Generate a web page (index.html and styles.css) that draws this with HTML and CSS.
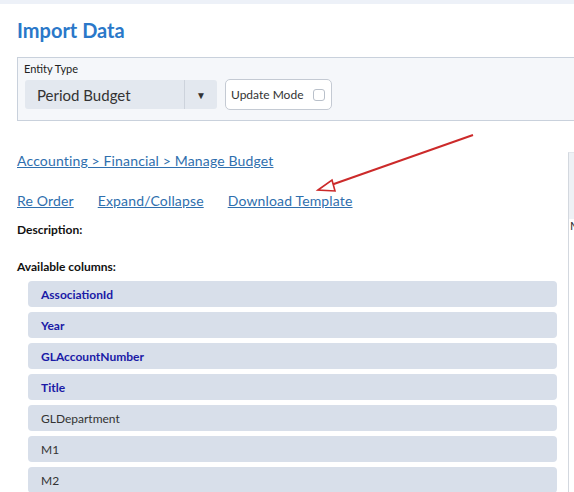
FILE: index.html
```html
<!DOCTYPE html>
<html>
<head>
<meta charset="utf-8">
<link rel="stylesheet" href="styles.css">
</head>
<body>
<div class="topbar"></div>
<div class="page">
  <h1 class="title">Import Data</h1>
  <div class="entity-panel">
    <div class="field-label">Entity Type</div>
    <div class="field-row">
      <div class="select">
        <span class="select-value">Period Budget</span>
        <span class="select-arrow">▼</span>
      </div>
      <label class="update-mode">Update Mode <span class="check"></span></label>
    </div>
  </div>
  <div class="content">
    <div class="main-col">
      <a class="link crumb" href="#">Accounting &gt; Financial &gt; Manage Budget</a>
      <div class="actions">
        <a class="link" href="#">Re Order</a>
        <a class="link" href="#">Expand/Collapse</a>
        <a class="link" href="#">Download Template</a>
      </div>
      <div class="label">Description:</div>
      <div class="label cols-label">Available columns:</div>
      <ul class="columns">
        <li class="req">AssociationId</li>
        <li class="req">Year</li>
        <li class="req">GLAccountNumber</li>
        <li class="req">Title</li>
        <li>GLDepartment</li>
        <li>M1</li>
        <li>M2</li>
      </ul>
    </div>
    <div class="side-col">
      <div class="side-head"></div>
      <div class="side-text">M</div>
    </div>
  </div>
</div>
<svg class="annot" width="574" height="492" viewBox="0 0 574 492">
  <line x1="473" y1="135" x2="331" y2="185" stroke="#cc2a2a" stroke-width="2"/>
  <polygon points="318,190 332,180 335,191" fill="#fff" stroke="#cc2a2a" stroke-width="1.6" stroke-linejoin="miter"/>
</svg>
</body>
</html>
```
FILE: styles.css
```css
html, body {
  margin: 0;
  padding: 0;
  background: #ffffff;
  overflow: hidden;
  width: 574px;
  height: 492px;
}
body {
  font-family: Lato, "Liberation Sans", sans-serif;
  color: #222;
  position: relative;
}
.topbar {
  height: 4px;
  background: #edf1f8;
}
.page {
  padding-left: 17px;
}
.title {
  margin: 0;
  padding-top: 14px;
  height: 39px;
  font-size: 20px;
  font-weight: 700;
  color: #2a78c9;
  line-height: 24px;
}
.entity-panel {
  width: 600px;
  height: 64px;
  box-sizing: border-box;
  background: #f5f7fa;
  border: 1px solid #c9d1dc;
  padding: 4px 0 0 6px;
}
.field-label {
  font-size: 11px;
  color: #222;
  line-height: 13px;
}
.field-row {
  display: flex;
  align-items: center;
  gap: 8px;
  margin-top: 4px;
}
.select {
  width: 192px;
  height: 29px;
  background: #e3e8ef;
  border-radius: 3px;
  display: flex;
  align-items: center;
  box-sizing: border-box;
  margin-left: 1px;
}
.select-value {
  flex: 1;
  padding-left: 12px;
  font-size: 15px;
  color: #333;
}
.select-arrow {
  width: 33px;
  height: 29px;
  border-left: 1px solid #cdd3dc;
  display: flex;
  align-items: center;
  justify-content: center;
  font-size: 10px;
  color: #333;
  box-sizing: border-box;
}
.update-mode {
  height: 31px;
  width: 107px;
  box-sizing: border-box;
  background: #ffffff;
  border: 1px solid #c4cad3;
  border-radius: 5px;
  font-size: 12px;
  color: #333;
  display: flex;
  align-items: center;
  padding-left: 5px;
  gap: 10px;
}
.check {
  width: 10px;
  height: 10px;
  border: 1px solid #b9c0ca;
  border-radius: 3px;
  background: #fff;
}
.content {
  display: flex;
  gap: 11px;
}
.main-col {
  flex: 0 0 540px;
  padding-top: 31px;
}
.link {
  color: #2f6fae;
  font-size: 14px;
  letter-spacing: 0.15px;
  text-decoration: underline;
  line-height: 17px;
}
.crumb {
  display: block;
}
.actions {
  display: flex;
  gap: 24px;
  margin-top: 23px;
}
.label {
  font-size: 12px;
  font-weight: 700;
  color: #111;
  line-height: 14px;
}
.actions + .label {
  margin-top: 14px;
}
.cols-label {
  margin-top: 23px;
}
.columns {
  list-style: none;
  margin: 7px 0 0 11px;
  padding: 0;
  display: flex;
  flex-direction: column;
  gap: 5px;
}
.columns li {
  height: 26px;
  background: #d8dfea;
  border-radius: 4px;
  font-size: 12px;
  color: #333;
  display: flex;
  align-items: center;
  padding-left: 13px;
}
.columns li.req {
  color: #1a1aa6;
  font-weight: 700;
}
.side-col {
  flex: 0 0 40px;
  margin-top: 31px;
  border-left: 1px solid #d3d8df;
  border-top: 1px solid #e3e7ec;
  height: 400px;
}
.side-head {
  height: 66px;
  background: #eef1f5;
}
.side-text {
  font-size: 12px;
  color: #333;
  padding-left: 1px;
  line-height: 14px;
}
.annot {
  position: absolute;
  left: 0;
  top: 0;
  pointer-events: none;
}
```
